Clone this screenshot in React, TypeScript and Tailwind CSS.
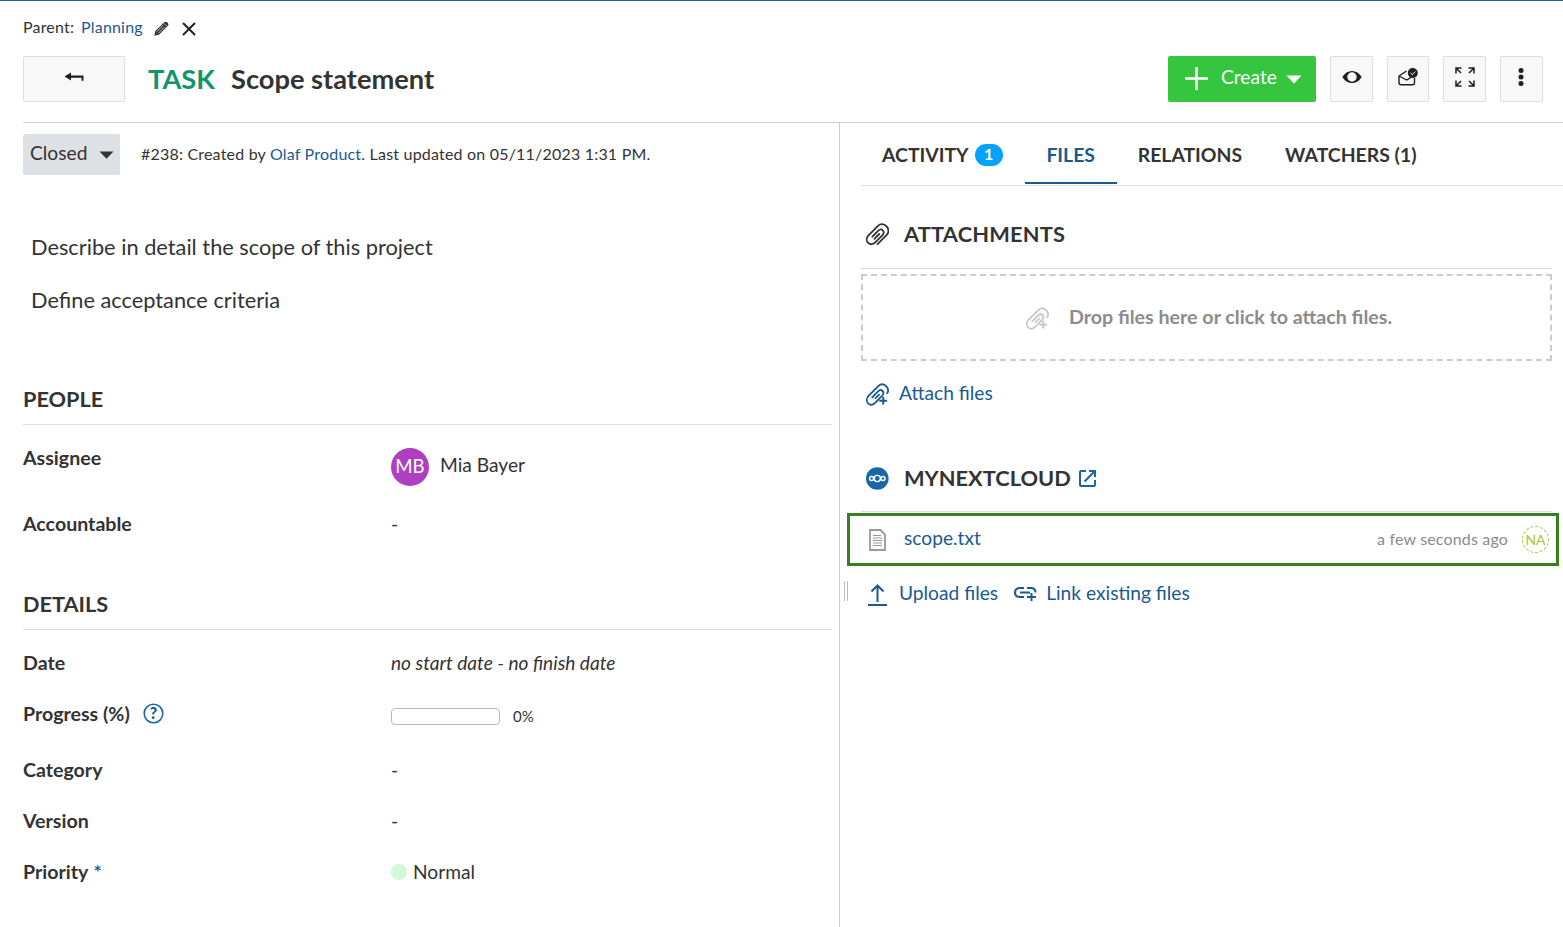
import type { ReactNode } from "react";

function Clip({ plus = false }: { plus?: boolean }) {
  return (
    <svg width="24" height="24" viewBox="0 0 24 24" fill="none" stroke="currentColor" strokeWidth="1.8" strokeLinecap="round">
      {plus ? (
        <>
          <path d="M22.1 11.2C23.6 9.2 23.1 6.4 21.3 4.4C19.1 1.8 15.9 1.5 13.6 3.8L3.7 13.7C1.3 16.2 1.2 19.3 3.1 21.3C5.1 23.3 7.9 23 10.1 20.8L17.2 13.6C18.7 12 18.8 10.2 17.6 9C16.3 7.7 14.5 7.9 13.1 9.3L7.2 15.3M10.5 16.2L14.1 12.6" />
          <path d="M18.2 14.8V22.6M14.3 18.7H22.1" strokeLinecap="butt" strokeWidth="2" />
        </>
      ) : (
        <path d="M12.5 22.2L21.5 13.1C24 10.4 24 7 21.4 4.2C18.9 1.5 15.5 1.3 13 3.8L3.5 13.4C1.3 15.7 1.2 18.9 3.2 20.9C5.2 22.9 8.1 22.6 10.3 20.4L17.5 13.1C19.1 11.4 19.1 9.5 17.8 8.3C16.4 7 14.6 7.3 13.1 8.8L7.4 14.7M9.5 16.8L14.2 12" />
      )}
    </svg>
  );
}

function IconButton({ width, children }: { width: string; children: ReactNode }) {
  return (
    <button className={`flex h-[46px] items-center justify-center rounded-[2px] border border-[#ddd] bg-[#f8f8f8] pb-[5px] text-[#1f1f1f] ${width}`}>
      {children}
    </button>
  );
}

function Row({ label, height, children }: { label: ReactNode; height: string; children: ReactNode }) {
  return (
    <div className={`flex items-center ${height}`}>
      <div className="flex w-[368px] shrink-0 items-center text-[19.6px] font-bold">{label}</div>
      {children}
    </div>
  );
}

function Header() {
  return (
    <header className="ml-[23px]">
      <div className="flex h-[52px] items-center text-[16px] tracking-[0.18px]">
        <span>Parent:</span>
        <a className="ml-[7px] text-[#1a5a91]">Planning</a>
        <svg className="mt-[3px] ml-[11px]" width="15" height="15" viewBox="0 0 15 15">
          <path d="M0.3 14.7L1.3 10L10.2 1.2Q11.5 0 13.5 1.5Q15.2 3.5 13.8 4.8L5 13.7Z" fill="#333" />
          <path d="M2.7 10.7L9.1 4.3M4.3 12.3L10.7 5.9" stroke="#fff" strokeWidth="0.7" />
          <path d="M9.8 2.2L12.8 5.2" stroke="#fff" strokeWidth="0.6" />
        </svg>
        <svg className="mt-[3px] ml-[13px]" width="14" height="14" viewBox="0 0 14 14">
          <path d="M1 1L13 13M13 1L1 13" stroke="#222" strokeWidth="2" />
        </svg>
      </div>
      <div className="mt-[3px] flex h-[46px] items-center">
        <IconButton width="w-[102px]">
          <svg width="20" height="10" viewBox="0 0 20 10">
            <path d="M0.5 4.5L7 0.5V8.5ZM6.5 3.5H19.5V8.8H17.5V5.8H6.5Z" fill="currentColor" />
          </svg>
        </IconButton>
        <h1 className="ml-[23px] flex text-[27.25px] leading-[46px] font-bold">
          <span className="w-[83px] text-[#11966b]">TASK</span>
          <span>Scope statement</span>
        </h1>
        <button className="mr-[14px] ml-auto flex h-[46px] w-[148px] items-center rounded-[2px] bg-[#35c53f] pb-[5px] pl-[17px] text-[19.2px] text-white">
          <svg className="mt-[3px] shrink-0" width="23" height="23" viewBox="0 0 23 23">
            <path d="M11.5 0V23M0 11.5H23" stroke="currentColor" strokeWidth="2.6" />
          </svg>
          <span className="ml-[13px] w-[65px] text-left">Create</span>
          <svg className="mt-[5px]" width="16" height="9" viewBox="0 0 16 9">
            <path d="M0.5 0.5H15.5L8 8.5Z" fill="currentColor" />
          </svg>
        </button>
        <div className="mr-5 flex gap-[14px]">
          <IconButton width="w-[43px]">
            <svg width="20" height="14" viewBox="0 0 20 14">
              <path fillRule="evenodd" d="M0.3 7Q4 1 10 1T19.7 7Q16 13 10 13T0.3 7ZM10 2.3A4.7 4.7 0 1 0 10 11.7A4.7 4.7 0 1 0 10 2.3Z" fill="currentColor" />
            </svg>
          </IconButton>
          <IconButton width="w-[42px]">
            <svg width="20" height="18" viewBox="0 0 20 18" fill="none">
              <path d="M8.5 3L1.7 7.5Q1 8 1 9V14.5Q1 16.7 3 16.7H14.5Q16.5 16.7 16.5 14.5V9.7M2 8.5L8.7 12L13.5 9.2" stroke="currentColor" strokeWidth="1.4" />
              <circle cx="14.8" cy="5" r="5" fill="currentColor" />
              <path d="M12.5 5L14.3 6.7L17.2 3.5" stroke="#fff" />
            </svg>
          </IconButton>
          <IconButton width="w-[43px]">
            <svg width="20" height="20" viewBox="0 0 20 20" fill="none" stroke="currentColor" strokeWidth="1.5">
              <path d="M1 6.5V1H6.5M1 1L6 6M13.5 1H19V6.5M19 1L14 6M1 13.5V19H6.5M1 19L6 14M13.5 19H19V13.5M19 19L14 14" />
            </svg>
          </IconButton>
          <IconButton width="w-[43px]">
            <svg className="mr-px" width="6" height="18" viewBox="0 0 6 18" fill="currentColor">
              <circle cx="3" cy="2.6" r="2.5" /><circle cx="3" cy="9" r="2.5" /><circle cx="3" cy="15.4" r="2.5" />
            </svg>
          </IconButton>
        </div>
      </div>
      <div className="mt-5 border-t border-[#ccc]" />
    </header>
  );
}

function LeftPanel() {
  return (
    <main className="w-[839px] shrink-0 pr-[7px] pl-[23px]">
      <div className="mt-[11px] flex h-[41px] items-center">
        <button className="flex h-[41px] w-[97px] items-center rounded-[2px] bg-[#dde1e6] pb-1 pl-[7px]">
          <span className="w-[69px] text-left">Closed</span>
          <svg className="mt-[4px]" width="15" height="8" viewBox="0 0 15 8"><path d="M0.5 0.5H14.5L7.5 7.7Z" fill="#333" /></svg>
        </button>
        <p className="mb-[2px] ml-[21px] text-[16px] tracking-[0.2px] whitespace-pre">#238: Created by <a className="text-[#1a5a91]">Olaf Product</a>. Last updated on 05/11/2023 1:31 PM.</p>
      </div>
      <div className="mt-[46px] ml-2 text-[21.79px]">
        <p className="h-[53px] leading-[52px]">Describe in detail the scope of this project</p>
        <p className="h-[53px] leading-[52px]">Define acceptance criteria</p>
      </div>
      <h2 className="mt-[47px] h-[51px] border-b border-[#ddd] text-[21.7px] leading-[50px] font-bold">PEOPLE</h2>
      <Row height="h-[66px]" label={<span>Assignee</span>}>
        <span className="mt-[17px] flex size-[38px] items-center justify-center rounded-full bg-[#ae3fc0] pb-[2px] text-[18.67px] text-white">MB</span>
        <span className="mt-[13px] ml-[11px]">Mia Bayer</span>
      </Row>
      <Row height="h-[66px]" label="Accountable">-</Row>
      <h2 className="mt-[22px] h-[51px] border-b border-[#ddd] text-[21.7px] leading-[50px] font-bold">DETAILS</h2>
      <Row height="h-[65px]" label="Date"><i className="text-[19.1px]">no start date - no finish date</i></Row>
      <Row
        height="mt-px h-[35px]"
        label={
          <>
            Progress (%)
            <svg className="ml-[13px]" width="21" height="21" viewBox="0 0 21 21">
              <circle cx="10.5" cy="10.5" r="9.3" fill="none" stroke="#1a67a3" strokeWidth="1.6" />
              <text x="10.5" y="16" textAnchor="middle" fontSize="16" fontWeight="900" fill="#1a5a91">?</text>
            </svg>
          </>
        }
      >
        <span className="mt-[5px] h-[17px] w-[109px] rounded-[4px] border border-[#bbb]" />
        <span className="mt-[5px] ml-[13px] text-[15px]">0%</span>
      </Row>
      <Row height="mt-[13px] h-[51px]" label="Category">-</Row>
      <Row height="h-[51px]" label="Version">-</Row>
      <Row height="h-[51px]" label={<>Priority<span className="ml-[5px] text-[#1a67a3]">*</span></>}>
        <span className="mt-px size-4 rounded-full bg-[#d3f9d8]" />
        <span className="ml-[6px]">Normal</span>
      </Row>
    </main>
  );
}

function RightPanel() {
  return (
    <aside className="min-w-0 flex-1 border-l border-[#ccc]">
      <nav className="ml-[21px] flex h-[63px] border-b border-[#ddd] text-[19.4px] font-bold leading-[64px]">
        <a className="ml-[21px] flex h-16 items-center">
          ACTIVITY
          <span className="ml-[6px] flex h-[22px] w-7 items-center justify-center rounded-full bg-[#00a3ff] pb-[2px] text-[16px] leading-none text-white">1</span>
        </a>
        <a className="ml-[22px] h-[61px] w-[92px] border-b-2 border-[#1a5a91] text-center text-[#1a5a91]">FILES</a>
        <a className="ml-[21px]">RELATIONS</a>
        <a className="ml-[43px]">WATCHERS (1)</a>
      </nav>
      <section className="mr-[11px] ml-[21px]">
        <h2 className="mt-[14px] flex h-[69px] items-center border-b border-[#ddd] pl-1 text-[21.8px] font-bold">
          <Clip /><span className="ml-[15px] leading-6 tracking-[0.2px]">ATTACHMENTS</span>
        </h2>
        <div className="mt-[5px] flex h-[87px] items-center justify-center border-2 border-dashed border-[#ccc] pl-1 text-[19.65px] font-bold text-[#8c8c8c]">
          <span className="text-[#c8c8c8]"><Clip plus /></span>
          <span className="mb-[2px] ml-5">Drop files here or click to attach files.</span>
        </div>
        <a className="mt-[12px] flex h-10 items-center pl-1 text-[#1a5a91]">
          <span className="mt-[2px]"><Clip plus /></span><span className="ml-[10px]">Attach files</span>
        </a>
        <h2 className="mt-[31px] flex h-[68px] items-center border-b border-[#ddd] pl-1 text-[21.8px] font-bold">
          <svg width="24" height="24" viewBox="0 0 24 24" fill="none" stroke="#fff" strokeWidth="1.4">
            <circle cx="12.3" cy="12.5" r="11.3" fill="#1a67a3" stroke="none" />
            <circle cx="12.3" cy="12.5" r="3.1" /><circle cx="6.6" cy="12.5" r="2" /><circle cx="18" cy="12.5" r="2" />
          </svg>
          <span className="ml-[15px]">MYNEXTCLOUD</span>
          <svg className="mt-[2px] ml-2" width="17" height="17" viewBox="0 0 17 17" fill="none" stroke="#1a67a3" strokeWidth="2">
            <path d="M7 1H2Q1 1 1 2V15Q1 16 2 16H15Q16 16 16 15V10M10 1H16V7M16 1L5.5 11.5" />
          </svg>
        </h2>
      </section>
      <div className="mt-px mr-1 ml-[7px] flex h-[53px] items-center border-[3px] border-[#37801f] pr-[7px] pl-[19px]">
        <svg width="17" height="22" viewBox="0 0 17 22" fill="none" stroke="#999">
          <path d="M1 1H11.5L16 5.5V21H1Z" strokeWidth="1.8" />
          <path d="M4 6.5H12M4 9H13M4 11.5H13M4 14H13M4 16.5H13" strokeWidth="1.2" />
        </svg>
        <a className="mb-1 ml-[18px] text-[#1a5a91]">scope.txt</a>
        <span className="mb-[2px] ml-auto text-[16px] tracking-[0.16px] text-[#8c8c8c]">a few seconds ago</span>
        <span className="ml-[14px] flex size-[27px] items-center justify-center rounded-full border border-dashed border-[#acc43b] text-[14px] text-[#acc43b]">NA</span>
      </div>
      <div className="flex h-[53px] items-center text-[#1a5a91]">
        <span className="mt-[-4px] ml-[4px] h-5 w-[4px] border-x border-[#bbb]" />
        <svg className="mt-[4px] ml-5" width="19" height="22" viewBox="0 0 19 22" fill="none" stroke="currentColor" strokeWidth="2">
          <path d="M0 21H19M9.5 18V1.5M3.5 7.5L9.5 1.5L15.5 7.5" />
        </svg>
        <span className="ml-3">Upload files</span>
        <svg className="mt-[2px] ml-4" width="23" height="16" viewBox="0 0 23 16" fill="none" stroke="currentColor" strokeWidth="2">
          <path d="M10 2H6Q1 2 1 6.5T6 11H10M6 6.5H16M13 2H17Q21.5 2 21.5 6.5M17.5 7V15M13 11H22" />
        </svg>
        <span className="ml-[9px]">Link existing files</span>
      </div>
    </aside>
  );
}

export default function App() {
  return (
    <div className="flex h-[927px] flex-col overflow-hidden border-t border-[#1a67a3] bg-white font-['Lato',sans-serif] text-[19.2px] leading-[24px] text-[#333]">
      <Header />
      <div className="flex min-h-0 flex-1">
        <LeftPanel />
        <RightPanel />
      </div>
    </div>
  );
}
